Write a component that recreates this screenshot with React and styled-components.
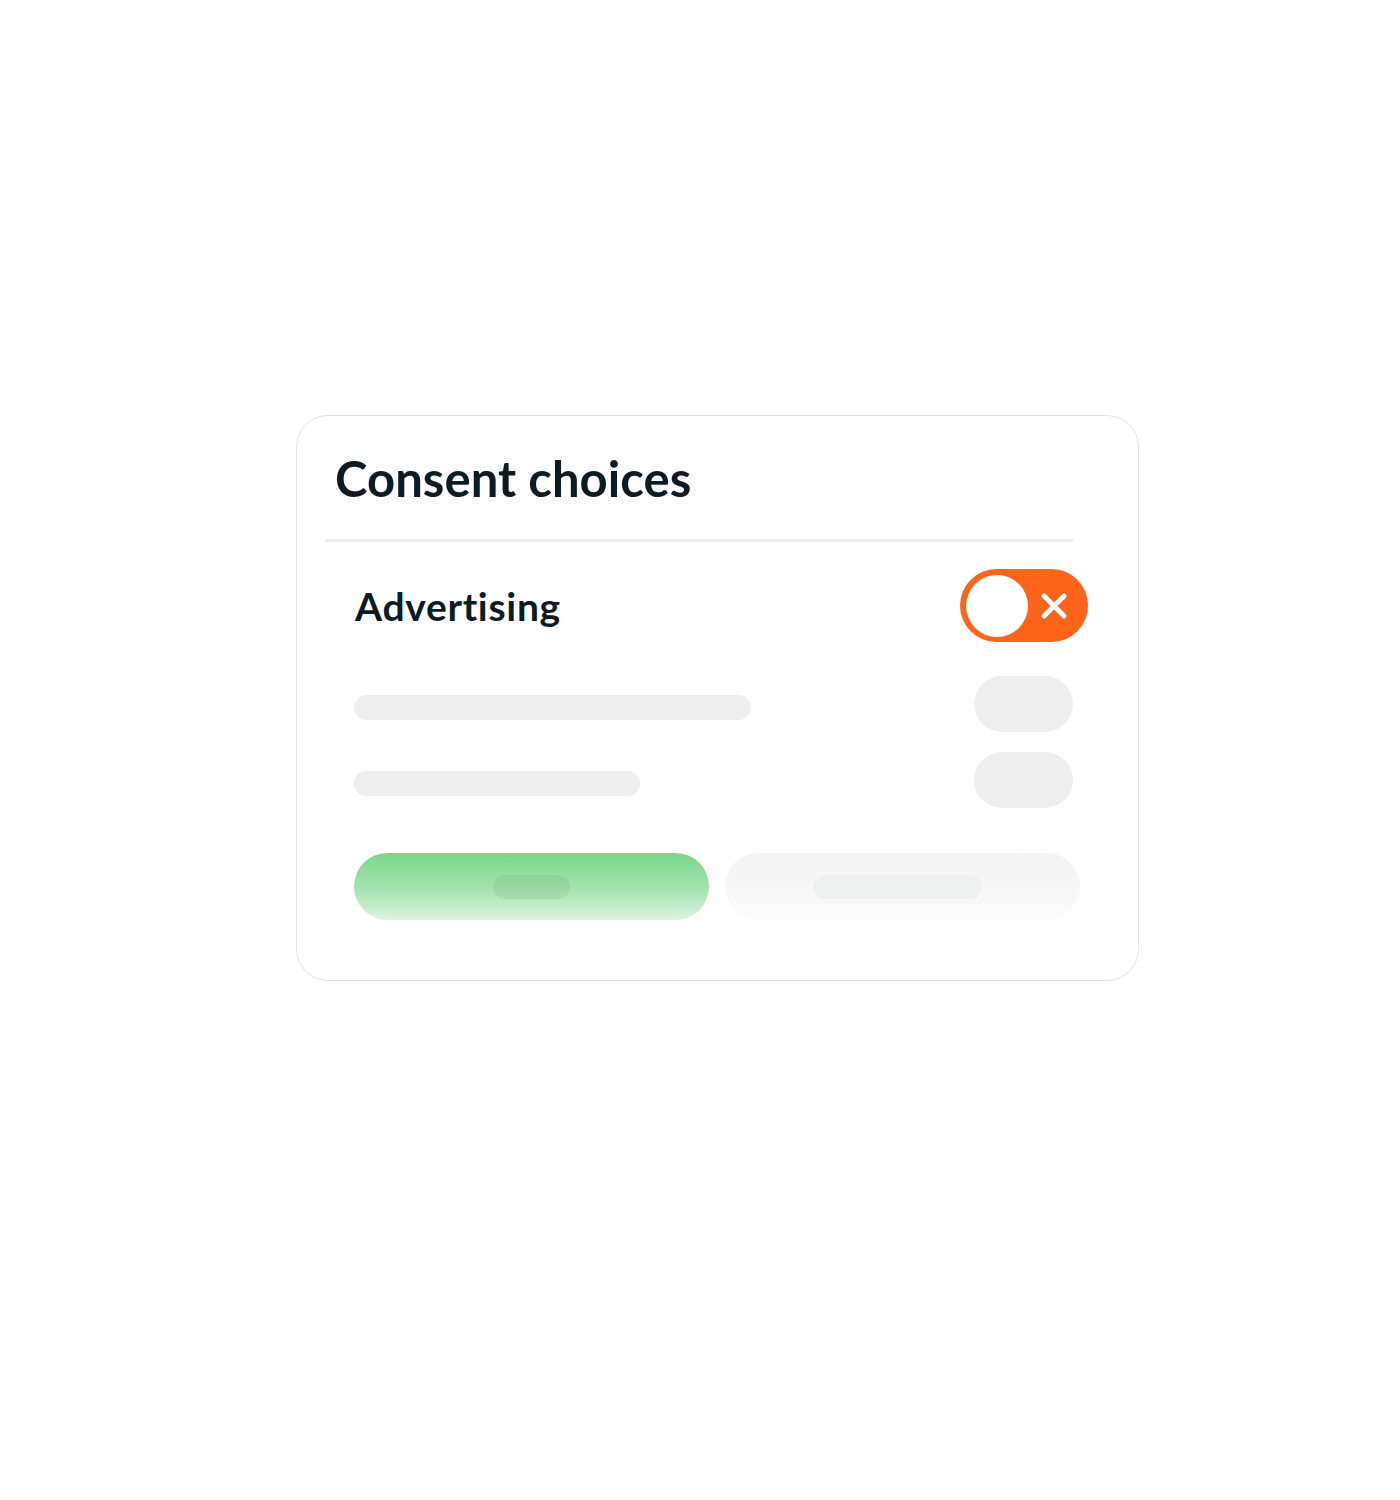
import React from "react";
import styled, { createGlobalStyle } from "styled-components";

const Global = createGlobalStyle`
  html, body { margin: 0; padding: 0; background: #ffffff; }
  body { font-family: "Lato", "Liberation Sans", sans-serif; }
`;

const Page = styled.div`
  width: 1400px;
  height: 1500px;
  box-sizing: border-box;
  padding: 415px 0 0 296px;
`;

const Card = styled.section`
  box-sizing: border-box;
  width: 843px;
  height: 566px;
  border: 1.5px solid #e1e3e3;
  border-radius: 32px;
  background: #fff;
  display: flex;
  flex-direction: column;
`;

const Title = styled.h1`
  margin: 0;
  padding: 33px 0 0 38px;
  font-size: 49px;
  line-height: 58px;
  font-weight: 700;
  color: #0c1c25;
  letter-spacing: 0.05px;
  font-variant-ligatures: none;
`;

const Divider = styled.hr`
  margin: 32px 0 0 28px;
  width: 748px;
  height: 3px;
  border: 0;
  background: #ededed;
`;

const Body = styled.div`
  display: flex;
  flex-direction: column;
  padding: 0 0 0 57px;
`;

const Row = styled.div`
  display: flex;
  align-items: center;
  justify-content: space-between;
  height: ${(p) => p.$h}px;
  margin-top: ${(p) => p.$mt}px;
  padding-right: ${(p) => p.$pr}px;
`;

const Label = styled.span`
  font-size: 39px;
  font-weight: 700;
  color: #0c1c25;
  padding-left: 1px;
  letter-spacing: 0.7px;
  font-variant-ligatures: none;
`;

const Toggle = styled.div`
  box-sizing: border-box;
  width: 128px;
  height: 73px;
  border-radius: 37px;
  background: #ff6419;
  display: flex;
  align-items: center;
  padding-left: 6px;
  gap: 11px;
`;

const Knob = styled.div`
  width: 62px;
  height: 62px;
  border-radius: 50%;
  background: #fff;
`;

const Bar = styled.div`
  width: ${(p) => p.$w}px;
  height: 25px;
  border-radius: 13px;
  background: #eeeeee;
  margin-top: 7px;
`;

const Pill = styled.div`
  width: 99px;
  height: 56px;
  border-radius: 28px;
  background: #eeeeee;
`;

const Buttons = styled.div`
  display: flex;
  gap: 16px;
  margin-top: 45px;
`;

const Button = styled.div`
  width: 355px;
  height: 67px;
  border-radius: 34px;
  display: flex;
  align-items: center;
  justify-content: center;
  background: ${(p) =>
    p.$primary
      ? "linear-gradient(180deg, #79d58b 0%, #a6e3b1 55%, #dcf4e0 100%)"
      : "linear-gradient(180deg, #f3f3f3 0%, #f8f8f8 60%, #fcfcfc 100%)"};
`;

const ButtonText = styled.div`
  width: ${(p) => p.$w}px;
  height: 24px;
  border-radius: 12px;
  background: ${(p) => (p.$primary ? "rgba(120, 175, 130, 0.22)" : "#eeefef")};
  margin-left: ${(p) => p.$ml}px;
`;

function CloseIcon() {
  return (
    <svg width="30" height="30" viewBox="0 0 30 30">
      <path
        d="M5 5 L25 25 M25 5 L5 25"
        stroke="#fff"
        strokeWidth="5"
        strokeLinecap="round"
        fill="none"
      />
    </svg>
  );
}

export default function App() {
  return (
    <>
      <Global />
      <Page>
        <Card>
          <Title>Consent choices</Title>
          <Divider />
          <Body>
            <Row $h={73} $mt={27} $pr={50}>
              <Label>Advertising</Label>
              <Toggle>
                <Knob />
                <CloseIcon />
              </Toggle>
            </Row>
            <Row $h={56} $mt={34} $pr={65}>
              <Bar $w={397} />
              <Pill />
            </Row>
            <Row $h={56} $mt={20} $pr={65}>
              <Bar $w={286} />
              <Pill />
            </Row>
            <Buttons>
              <Button $primary>
                <ButtonText $primary $w={77} $ml={0} />
              </Button>
              <Button>
                <ButtonText $w={168} $ml={-10} />
              </Button>
            </Buttons>
          </Body>
        </Card>
      </Page>
    </>
  );
}
